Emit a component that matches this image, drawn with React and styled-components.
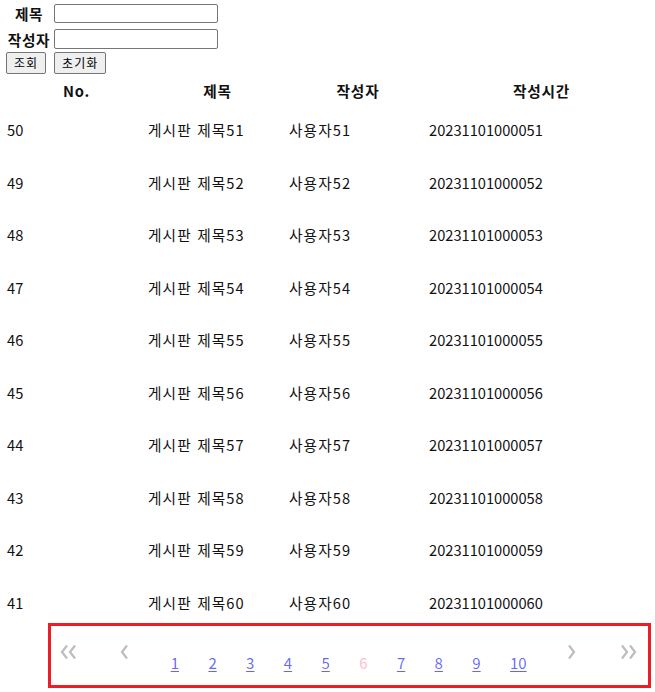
import React from "react";
import styled, { createGlobalStyle } from "styled-components";

const GlobalStyle = createGlobalStyle`
  html, body { margin: 0; padding: 0; background: #fff; }
  body {
    font-family: "Noto Sans CJK KR", "Noto Sans", sans-serif;
    color: #111;
  }
`;

const Page = styled.div`
  padding: 4px 0 0 6px;
  width: 649px;
`;

const SearchForm = styled.form`
  display: grid;
  grid-template-columns: 46px 164px;
  column-gap: 2px;
  row-gap: 6px;
  align-items: center;
  margin: 0;
`;

const Label = styled.label`
  font-size: 14.67px;
  font-weight: bold;
  text-align: center;
  line-height: 19px;
  letter-spacing: 0.6px;
`;

const TextInput = styled.input`
  box-sizing: border-box;
  width: 164px;
  height: ${(p) => p.$h || 19}px;
  margin: 0;
  padding: 1px 2px;
  border: 1px solid #767676;
  border-radius: 2px;
  background: #fff;
  font-family: inherit;
`;

const ButtonRow = styled.div`
  grid-column: 1 / span 2;
  display: flex;
  gap: 8px;
  margin-top: -3px;
`;

const Button = styled.button`
  box-sizing: border-box;
  height: 22px;
  padding: 0 7px;
  margin: 0;
  border: 1px solid #767676;
  border-radius: 2px;
  background: #efefef;
  color: #000;
  font-family: "Noto Sans CJK KR", sans-serif;
  font-size: 12px;
  line-height: 18px;
  letter-spacing: 1px;
`;

const Table = styled.div`
  margin-top: 4px;
`;

const Row = styled.div`
  display: grid;
  grid-template-columns: 141px 141px 140px 1fr;
  align-items: center;
  height: ${(p) => (p.$head ? 26 : 52.5)}px;
`;

const HeadCell = styled.div`
  font-size: 14.67px;
  font-weight: bold;
  text-align: center;
  line-height: 20px;
  letter-spacing: 0.8px;
`;

const Cell = styled.div`
  font-size: 14.67px;
  line-height: 20px;
  padding-left: 1px;
  white-space: nowrap;
  letter-spacing: ${(p) => (p.$hangul ? 1.1 : 0)}px;
  word-spacing: ${(p) => (p.$hangul ? 1 : 0)}px;
`;

const Pagination = styled.nav`
  box-sizing: border-box;
  width: 603px;
  height: 65px;
  margin: -6px 0 0 42px;
  border: 3px solid #ee1c25;
  display: flex;
  align-items: flex-start;
  padding: 18px 0 0 9px;
`;

const Arrow = styled.span`
  display: inline-flex;
  margin-right: ${(p) => p.$mr || 0}px;
  margin-left: ${(p) => p.$ml || 0}px;
`;

const Pages = styled.div`
  display: flex;
  margin-top: 9px;
  margin-left: ${(p) => p.$ml}px;
`;

const PageLink = styled.a`
  padding: 0 14.7px;
  font-size: 15px;
  line-height: 20px;
  color: ${(p) => (p.$current ? "#ffc0cb" : "rgba(0, 0, 238, 0.6)")};
  text-decoration: ${(p) => (p.$current ? "none" : "underline")};
  text-underline-offset: 2px;
  cursor: pointer;
`;

const ChevronIcon = ({ dir = "left", double = false }) => {
  const w = double ? 18 : 9;
  const single = (x) =>
    dir === "left"
      ? `M${x + 7} 1.5 L${x + 2} 8 L${x + 7} 14.5`
      : `M${x + 2} 1.5 L${x + 7} 8 L${x + 2} 14.5`;
  return (
    <svg width={w} height="16" viewBox={`0 0 ${w} 16`} fill="none">
      <path d={single(0)} stroke="#bdbdbd" strokeWidth="2.2" />
      {double && <path d={single(8)} stroke="#bdbdbd" strokeWidth="2.2" />}
    </svg>
  );
};

const rows = Array.from({ length: 10 }, (_, i) => {
  const n = 51 + i;
  return {
    no: 50 - i,
    title: `게시판 제목${n}`,
    writer: `사용자${n}`,
    time: `202311010000${n}`,
  };
});

export default function App() {
  return (
    <>
      <GlobalStyle />
      <Page>
        <SearchForm onSubmit={(e) => e.preventDefault()}>
          <Label htmlFor="title">제목</Label>
          <TextInput id="title" />
          <Label htmlFor="writer">작성자</Label>
          <TextInput id="writer" $h={20} />
          <ButtonRow>
            <Button type="button">조회</Button>
            <Button type="button">초기화</Button>
          </ButtonRow>
        </SearchForm>
        <Table>
          <Row $head>
            <HeadCell>No.</HeadCell>
            <HeadCell>제목</HeadCell>
            <HeadCell>작성자</HeadCell>
            <HeadCell>작성시간</HeadCell>
          </Row>
          {rows.map((r) => (
            <Row key={r.no}>
              <Cell>{r.no}</Cell>
              <Cell $hangul>{r.title}</Cell>
              <Cell $hangul>{r.writer}</Cell>
              <Cell>{r.time}</Cell>
            </Row>
          ))}
        </Table>
        <Pagination>
          <Arrow $mr={42}>
            <ChevronIcon dir="left" double />
          </Arrow>
          <Arrow>
            <ChevronIcon dir="left" />
          </Arrow>
          <Pages $ml={27}>
            {[1, 2, 3, 4, 5, 6, 7, 8, 9, 10].map((p) => (
              <PageLink key={p} $current={p === 6}>
                {p}
              </PageLink>
            ))}
          </Pages>
          <Arrow $ml={26}>
            <ChevronIcon dir="right" />
          </Arrow>
          <Arrow $ml={44}>
            <ChevronIcon dir="right" double />
          </Arrow>
        </Pagination>
      </Page>
    </>
  );
}
